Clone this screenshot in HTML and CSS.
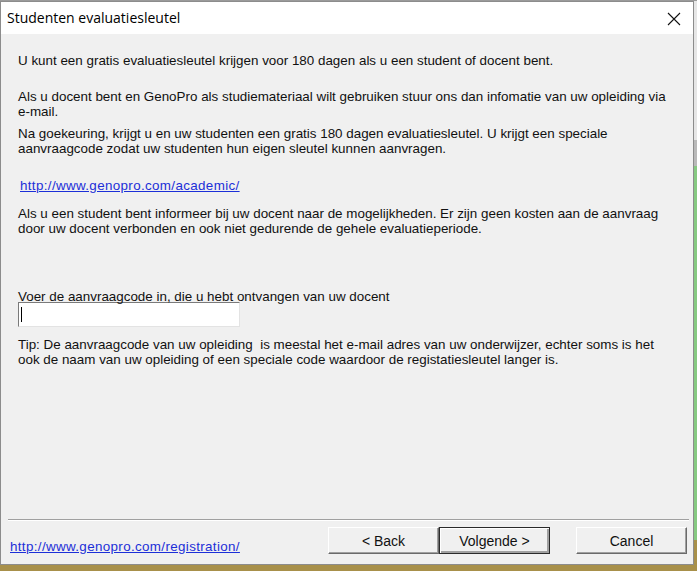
FILE: index.html
```html
<!DOCTYPE html>
<html lang="nl">
<head>
  <meta charset="UTF-8">
  <title>Studenten evaluatiesleutel</title>
  <link rel="stylesheet" href="styles.css">
</head>
<body>

  <div class="dialog">
    <div class="titlebar">
      <span class="title">Studenten evaluatiesleutel</span>
      <svg class="close" width="14" height="14" viewBox="0 0 14 14">
        <path d="M1 1 L13 13 M13 1 L1 13" stroke="#111" stroke-width="1.1" fill="none"/>
      </svg>
    </div>

    <div class="content">
      <p class="first">U kunt een gratis evaluatiesleutel krijgen voor 180 dagen als u een student of docent bent.</p>
      <p class="gap">Als u docent bent en GenoPro als studiemateriaal wilt gebruiken stuur ons dan infomatie van uw opleiding via e-mail.</p>
      <p class="near">Na goekeuring, krijgt u en uw studenten een gratis 180 dagen evaluatiesleutel. U krijgt een speciale aanvraagcode zodat uw studenten hun eigen sleutel kunnen aanvragen.</p>
      <p class="gap link-row"><a href="#">http://www.genopro.com/academic/</a></p>
      <p class="mid">Als u een student bent informeer bij uw docent naar de mogelijkheden. Er zijn geen kosten aan de aanvraag door uw docent verbonden en ook niet gedurende de gehele evaluatieperiode.</p>

      <label class="code-label">Voer de aanvraagcode in, die u hebt ontvangen van uw docent</label>
      <div class="code-input"><span class="caret"></span></div>

      <p class="tip">Tip: De aanvraagcode van uw opleiding&nbsp; is meestal het e-mail adres van uw onderwijzer, echter soms is het ook de naam van uw opleiding of een speciale code waardoor de registatiesleutel langer is.</p>
    </div>

    <div class="separator"></div>

    <div class="footer">
      <a href="#" class="footer-link">http://www.genopro.com/registration/</a>
      <div class="buttons">
        <button class="btn">&lt; Back</button>
        <button class="btn default">Volgende &gt;</button>
        <button class="btn cancel">Cancel</button>
      </div>
    </div>
  </div>

</body>
</html>
```

FILE: styles.css
```css
html, body {
  margin: 0;
  height: 100%;
}
body {
  background: linear-gradient(to bottom,
    #9a9a9a 0, #9a9a9a 1px,
    #e6e6e6 1px, #e6e6e6 140px,
    #b9b9b9 140px, #b9b9b9 166px,
    #86c981 166px, #86c981 540px,
    #a8904a 540px, #a8904a 100%);
  font-family: 'Liberation Sans', Arial, sans-serif;
  overflow: hidden;
}
.dialog {
  margin-top: 1px;
  width: 692px;
  height: 562px;
  background: #f0f0f0;
  border: 1px solid #8c8c8c;
  display: flex;
  flex-direction: column;
}
.titlebar {
  height: 32px;
  background: #fff;
  display: flex;
  align-items: center;
  justify-content: space-between;
  padding: 0 12px 0 6px;
  flex-shrink: 0;
}
.title {
  font-family: 'Open Sans', 'Noto Sans', sans-serif;
  font-size: 14px;
  color: #000;
  margin-top: -1px;
}
.close {
  margin-top: 1px;
}
.content {
  flex: 1;
  padding: 19px 18px 0 17px;
  font-size: 13.4px;
  line-height: 15px;
  color: #111;
}
.content p {
  margin: 0;
}
.content .gap {
  margin-top: 21px;
}
.content .link-row {
  margin-top: 22px;
}
.content .near {
  margin-top: 7px;
}
.content .mid {
  margin-top: 13px;
}
.link-row {
  padding-left: 2px;
}
a {
  color: #1c2fd8;
  text-decoration: underline;
  letter-spacing: 0.35px;
}
.code-label {
  display: block;
  margin-top: 53px;
  position: relative;
  z-index: 1;
}
.code-input {
  width: 220px;
  height: 23px;
  background: #fff;
  border: 1px solid #7a7a7a;
  border-right-color: #e3e3e3;
  border-bottom-color: #e3e3e3;
  margin-top: -2px;
  position: relative;
}
.caret {
  position: absolute;
  left: 2px;
  top: 4px;
  width: 1px;
  height: 15px;
  background: #000;
}
.content .tip {
  margin-top: 10px;
}
.separator {
  margin: 0 4px 0 7px;
  border-top: 1px solid #a0a0a0;
  border-bottom: 1px solid #fff;
  flex-shrink: 0;
}
.footer {
  height: 43px;
  display: flex;
  justify-content: space-between;
  padding: 6px 6px 0 9px;
  box-sizing: border-box;
  flex-shrink: 0;
}
.footer-link {
  font-size: 13.4px;
  margin-top: 12px;
}
.buttons {
  display: flex;
  align-items: flex-start;
}
.btn {
  width: 111px;
  height: 27px;
  font-family: 'Liberation Sans', Arial, sans-serif;
  font-size: 14px;
  color: #111;
  background: #f0f0f0;
  border: 1px solid;
  border-color: #fff #6a6a6a #6a6a6a #fff;
  box-shadow: inset -1px -1px 0 #a0a0a0;
  padding: 0;
}
.btn.default {
  border: 1px solid #2a2a2a;
  box-shadow: inset 1px 1px 0 #fff, inset -2px -2px 0 #a0a0a0;
}
.btn.cancel {
  margin-left: 26px;
}
```
